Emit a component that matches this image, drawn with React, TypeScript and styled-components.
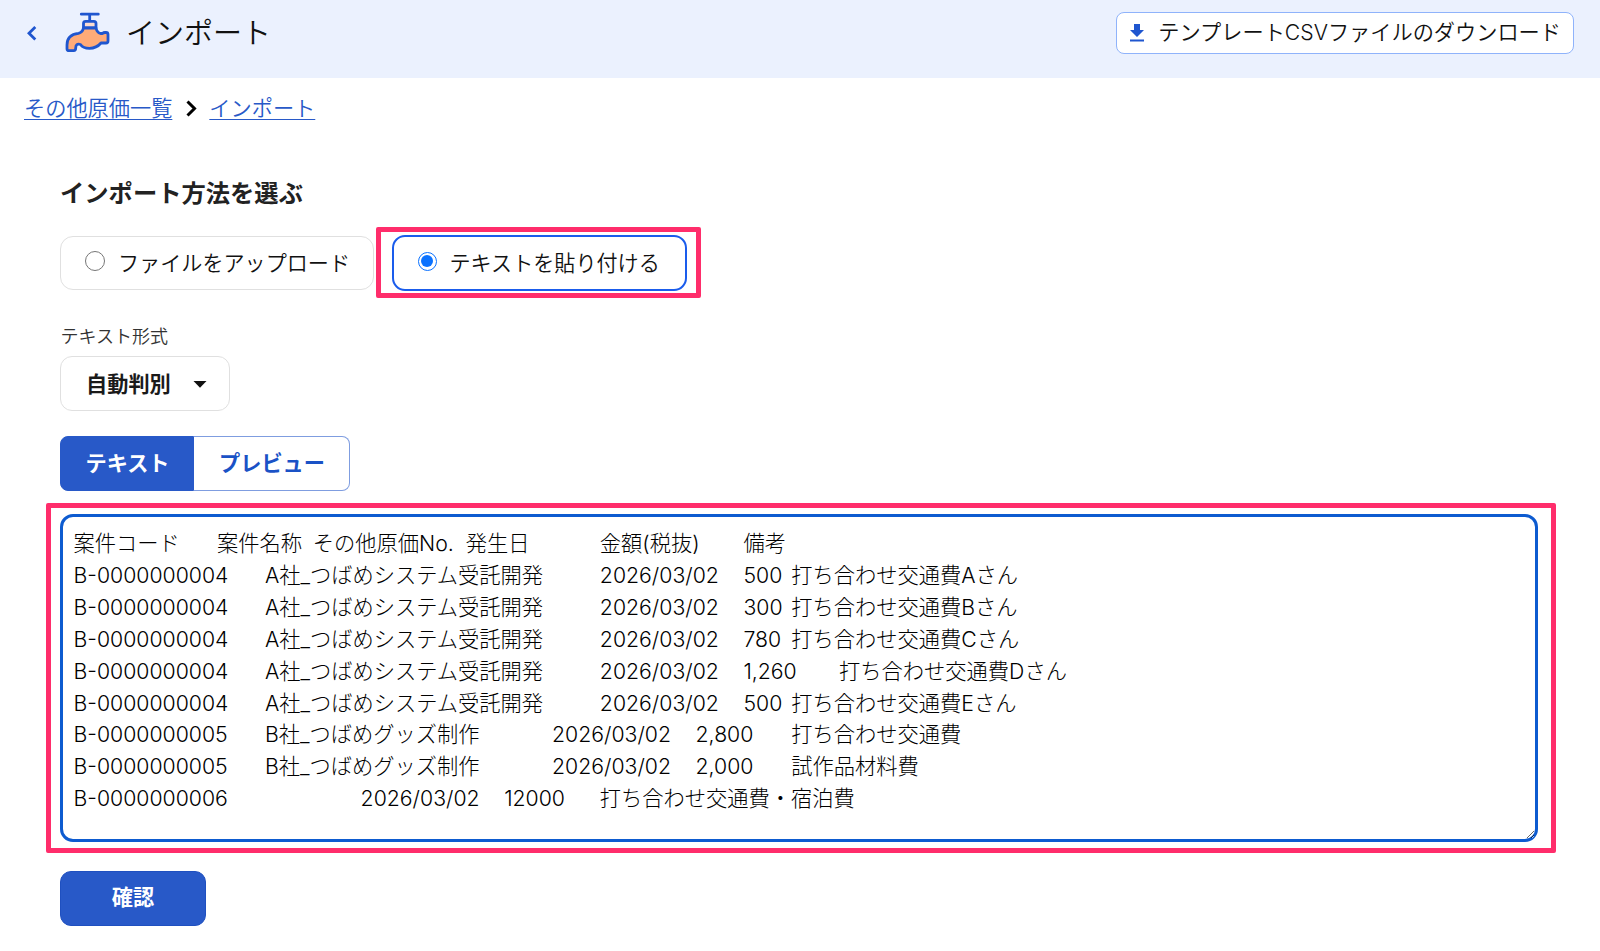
import React, { useState } from 'react';
import styled, { createGlobalStyle, css } from 'styled-components';

const BLUE = '#2859c8';

const GlobalStyle = createGlobalStyle`
  *, *::before, *::after { box-sizing: border-box; }
  body {
    margin: 0;
    background: #fff;
    color: #111;
    font-family: Inter, 'Noto Sans CJK JP', sans-serif;
    font-size: 21.2px;
    font-weight: 350;
    line-height: 1.5;
  }
`;

const Header = styled.header`
  display: flex;
  align-items: flex-start;
  justify-content: space-between;
  height: 78px;
  padding: 12px 26px 0 24px;
  background: #ebf1fe;
`;

const TitleGroup = styled.div`
  display: flex;
  align-items: center;
  height: 42px;
`;

const BackLink = styled.a`
  display: flex;
  width: 16px;
  margin-right: 24px;
`;

const Title = styled.h1`
  margin: 0 0 0 16px;
  padding-top: 2px;
  font-size: 29px;
  font-weight: 350;
  line-height: 42px;
`;

const DownloadButton = styled.button`
  display: flex;
  align-items: center;
  gap: 13px;
  height: 42px;
  padding: 0 12px;
  border: 1px solid #8fb3fb;
  border-radius: 8px;
  background: #fff;
  color: #111;
  font: inherit;
  white-space: nowrap;
`;

const Breadcrumb = styled.nav`
  display: flex;
  align-items: center;
  gap: 12.5px;
  height: 32px;
  margin: 15px 0 0 24px;
`;

const Crumb = styled.a`
  color: ${BLUE};
  text-decoration: underline;
  text-decoration-thickness: 1.3px;
  text-underline-offset: 3px;
`;

const Main = styled.main`
  display: flex;
  flex-direction: column;
  align-items: flex-start;
  padding: 50px 62px 0 60px;
`;

const Heading = styled.h2`
  margin: 0 0 24px;
  color: #222;
  font-size: 24.3px;
  font-weight: 600;
  line-height: 36px;
`;

const Methods = styled.div`
  display: flex;
  align-items: center;
  gap: 17.5px;
`;

const marked = css`
  position: relative;
  &::after {
    content: '';
    position: absolute;
    border: 5px solid #ff2d6b;
    border-radius: 2px;
    pointer-events: none;
  }
`;

const Marked = styled.div`
  ${marked}
  &::after { inset: -8px -14px -7px -16px; }
`;

const MarkedArea = styled.div`
  ${marked}
  display: flex;
  align-self: stretch;
  height: 328px;
  &::after { inset: -11px -18px -11px -14px; }
`;

const Option = styled.label<{ $selected: boolean }>`
  display: flex;
  align-items: center;
  gap: 13px;
  width: ${p => (p.$selected ? 295.5 : 314)}px;
  height: ${p => (p.$selected ? 56 : 54)}px;
  padding: 1px 0 0 24px;
  border: ${p => (p.$selected ? '2px solid #1a5cec' : '1px solid #e0e0e0')};
  border-radius: 13px;
  font-size: 21.1px;
  white-space: nowrap;
`;

const Radio = styled.span<{ $selected: boolean }>`
  display: grid;
  place-items: center;
  width: ${p => (p.$selected ? 19 : 20)}px;
  height: ${p => (p.$selected ? 19 : 20)}px;
  margin-bottom: 5px;
  border: ${p => (p.$selected ? '1.5px solid #0b72ff' : '1.3px solid #767676')};
  border-radius: 50%;
  &::after {
    content: '';
    width: 12px;
    height: 12px;
    border-radius: 50%;
    background: ${p => (p.$selected ? '#0b72ff' : 'transparent')};
  }
`;

const FieldLabel = styled.div`
  margin: 32px 0 6px;
  padding-left: 0.5px;
  color: #333;
  font-size: 18px;
  line-height: 27px;
`;

const Select = styled.button`
  display: flex;
  align-items: center;
  justify-content: space-between;
  width: 170px;
  height: 55px;
  padding: 2px 22px 0 25px;
  border: 1px solid #e0e0e0;
  border-radius: 12px;
  background: #fff;
  color: #1a1a1a;
  font: inherit;
  font-weight: 600;
`;

const Tabs = styled.div`
  display: flex;
  height: 55px;
  margin: 25px 0 23px;
`;

const Tab = styled.button<{ $active: boolean }>`
  width: ${p => (p.$active ? 134 : 156)}px;
  padding: 0 0 0 1px;
  border: 1px solid ${p => (p.$active ? BLUE : '#7f9de0')};
  border-left-color: ${BLUE};
  border-radius: ${p => (p.$active ? '8px 0 0 8px' : '0 8px 8px 0')};
  border-left-width: ${p => (p.$active ? 1 : 0)}px;
  background: ${p => (p.$active ? BLUE : '#fff')};
  color: ${p => (p.$active ? '#fff' : '#1a52c6')};
  font: inherit;
  font-weight: 600;
`;

const PasteArea = styled.textarea`
  flex: 1;
  height: 328px;
  padding: 11px 10.5px;
  border: 3px solid #0d5bd0;
  border-radius: 13px;
  outline: none;
  background: #fff;
  color: #000;
  font: inherit;
  font-size: 21.25px;
  font-weight: 300;
  line-height: 31.9px;
  tab-size: 47.85px;
  white-space: pre;
  overflow: hidden;
  resize: both;
`;

const Submit = styled.button`
  width: 146px;
  height: 55px;
  margin-top: 28.5px;
  padding: 0;
  border: 1px solid #1f50c0;
  border-radius: 11px;
  background: ${BLUE};
  color: #fff;
  font: inherit;
  font-weight: 600;
`;

const ROWS = [
  '案件コード\t案件名称\tその他原価No.  発生日\t\t金額(税抜)\t備考',
  'B-0000000004\tA社_つばめシステム受託開発\t\t2026/03/02\t500\t打ち合わせ交通費Aさん',
  'B-0000000004\tA社_つばめシステム受託開発\t\t2026/03/02\t300\t打ち合わせ交通費Bさん',
  'B-0000000004\tA社_つばめシステム受託開発\t\t2026/03/02\t780\t打ち合わせ交通費Cさん',
  'B-0000000004\tA社_つばめシステム受託開発\t\t2026/03/02\t1,260\t打ち合わせ交通費Dさん',
  'B-0000000004\tA社_つばめシステム受託開発\t\t2026/03/02\t500\t打ち合わせ交通費Eさん',
  'B-0000000005\tB社_つばめグッズ制作\t\t2026/03/02\t2,800\t打ち合わせ交通費',
  'B-0000000005\tB社_つばめグッズ制作\t\t2026/03/02\t2,000\t試作品材料費',
  'B-0000000006\t\t\t2026/03/02\t12000\t打ち合わせ交通費・宿泊費',
].join('\n');

const Faucet = () => (
  <svg width="46" height="42" viewBox="0 0 46 42" fill="none" stroke="#1f56cf" strokeWidth="2.8" strokeLinecap="round" strokeLinejoin="round">
    <path d="M17.300 2.200H34.300M25.700 2.200V9" />
    <path d="M19.500 16V11.500Q19.500 9.300 21.700 9.300H29.800Q32 9.300 32 11.500V16Z" fill="#fbdcd0" />
    <path d="M19.500 16H32Q33 20.500 36.500 21.500H38.500Q39.500 20.500 41 20.500H42Q44 20.500 44 22.500V29Q44 31 42 31H37Q32.500 36.300 25.500 36.300Q19 36.300 16.500 32.500Q11.700 31 11.700 36Q11.700 38.700 9.700 38.700H5Q3 38.700 3 36.700V33Q3 22.500 14.500 21.300Q18.500 20.500 19.500 16Z" fill="#ffab78" />
  </svg>
);

const METHODS = ['ファイルをアップロード', 'テキストを貼り付ける'];
const TABS = ['テキスト', 'プレビュー'];

export default function App() {
  const [method, setMethod] = useState(1);
  const [tab, setTab] = useState(0);
  const [text, setText] = useState(ROWS);

  const option = (i: number) => (
    <Option $selected={method === i} onClick={() => setMethod(i)}>
      <Radio $selected={method === i} />
      {METHODS[i]}
    </Option>
  );

  return (
    <>
      <GlobalStyle />
      <Header>
        <TitleGroup>
          <BackLink>
            <svg width="16" height="16" viewBox="0 0 16 16" fill="none" stroke="#1f56cf" strokeWidth="2.8">
              <path d="M11.300 2L5 8.300L11.300 14.600" />
            </svg>
          </BackLink>
          <Faucet />
          <Title>インポート</Title>
        </TitleGroup>
        <DownloadButton>
          <svg width="16" height="18" viewBox="0 0 16 18" fill="#1f56cf">
            <path d="M5 0H11V6H15L8 13L1 6H5ZM1 15.500H15V17.500H1Z" />
          </svg>
          テンプレートCSVファイルのダウンロード
        </DownloadButton>
      </Header>
      <Breadcrumb>
        <Crumb>その他原価一覧</Crumb>
        <svg width="12" height="18" viewBox="0 0 12 18" fill="none" stroke="#000" strokeWidth="3">
          <path d="M2.500 1.500L9.500 8.500L2.500 15.500" />
        </svg>
        <Crumb>インポート</Crumb>
      </Breadcrumb>
      <Main>
        <Heading>インポート方法を選ぶ</Heading>
        <Methods>
          {option(0)}
          <Marked>{option(1)}</Marked>
        </Methods>
        <FieldLabel>テキスト形式</FieldLabel>
        <Select>
          自動判別
          <svg width="14" height="7" viewBox="0 0 14 7" fill="#111">
            <path d="M0.500 0H13.500L7 6.800Z" />
          </svg>
        </Select>
        <Tabs>
          {TABS.map((name, i) => (
            <Tab key={name} $active={tab === i} onClick={() => setTab(i)}>
              {name}
            </Tab>
          ))}
        </Tabs>
        <MarkedArea>
          <PasteArea spellCheck={false} value={text} onChange={e => setText(e.target.value)} />
        </MarkedArea>
        <Submit>確認</Submit>
      </Main>
    </>
  );
}
